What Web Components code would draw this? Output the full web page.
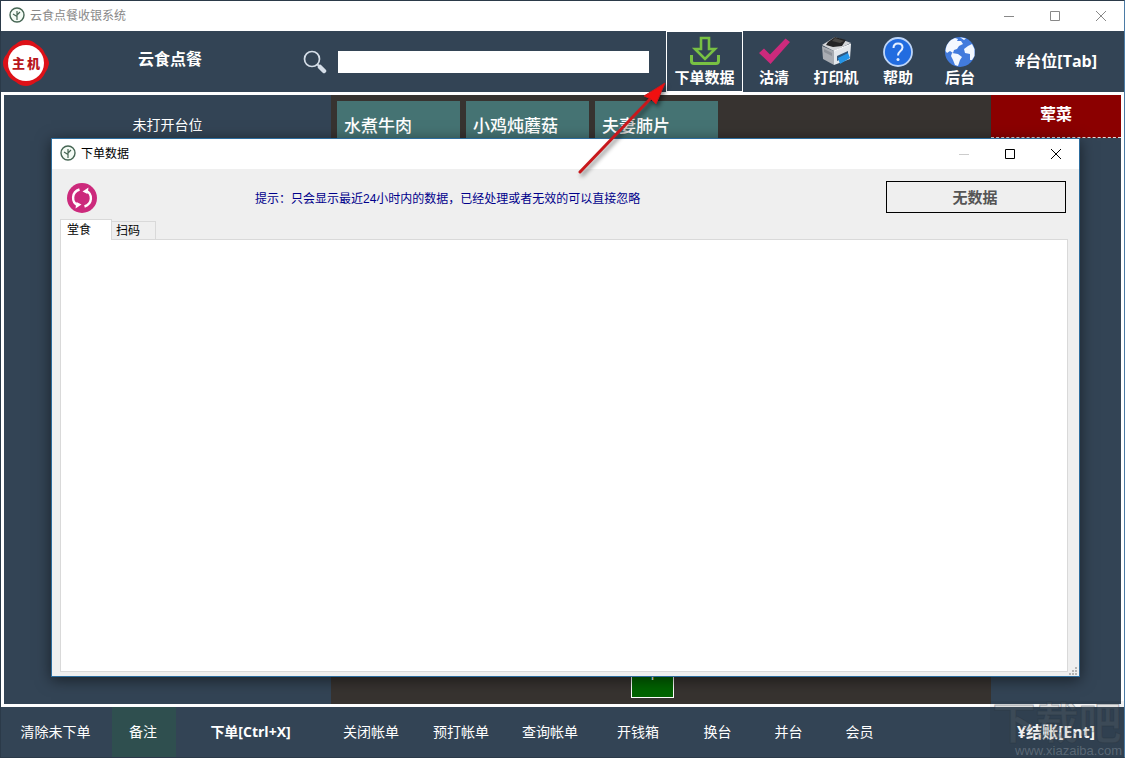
<!DOCTYPE html>
<html lang="zh-CN">
<head>
<meta charset="utf-8">
<title>云食点餐收银系统</title>
<style>
html,body{margin:0;height:100%}
body{font-family:"Open Sans","Noto Sans CJK SC",sans-serif;overflow:hidden}
</style>
</head>
<body>
<pos-app></pos-app>
<script>
const define=(name,html,setup)=>{
  const tpl=document.createElement('template');
  tpl.innerHTML=html;
  customElements.define(name,class extends HTMLElement{
    connectedCallback(){
      if(this.shadowRoot)return;
      this.attachShadow({mode:'open'}).append(tpl.content.cloneNode(true));
      if(setup)setup(this,this.shadowRoot);
    }
  });
};
const reset=`*{box-sizing:border-box}button{font:inherit;color:inherit;background:none;border:0;padding:0;margin:0;cursor:pointer}`;

define('title-bar',`<style>${reset}
:host{display:flex;height:30px;flex:none;background:#fff;color:var(--title,#888);padding-left:8px;align-items:center;font-size:12px}
span{flex:1;margin-left:5px;line-height:16px}
button{width:46px;height:28px;display:grid;place-items:center}
button:first-of-type{color:var(--min,inherit)}
svg{margin-bottom:2px}
svg.g{width:12px;height:12px;fill:none;stroke:currentColor;margin:0}
</style>
<svg width="16" height="16" viewBox="0 0 16 16" fill="none" stroke="#456553"><circle cx="8" cy="8" r="7" fill="#f4fbf5" stroke-width="1.4"/><path d="M8 13V4M8 9.500L4 7M8 8L11 5" stroke-width="1.200"/></svg>
<span><slot></slot></span>
<button aria-label="最小化"><svg class="g" viewBox="0 0 12 12"><path d="M1 6.500H11"/></svg></button>
<button aria-label="最大化"><svg class="g" viewBox="0 0 12 12"><path d="M1.500 1.500H10.500V10.500H1.500Z"/></svg></button>
<button aria-label="关闭"><svg class="g" viewBox="0 0 12 12"><path d="M1 1L11 11M11 1L1 11"/></svg></button>`);

const icons={
down:`<path d="M12 2H20V13H26L16 23L6 13H12Z" fill="none" stroke="#78c143" stroke-width="2.600"/><path d="M2.500 19V25Q2.500 27.500 5 27.500H27Q29.500 27.500 29.500 25V19" fill="none" stroke="#78c143" stroke-width="3"/>`,
check:`<path d="M1 17L6 12.500L12 18.500L27.500 2.500L32 6L12.500 28Z" fill="#cc2a7c"/>`,
printer:`<path d="M2 10L14 15L14 29L3 23Z" fill="#a9adb3"/><path d="M14 15L31 8L30 23L14 29Z" fill="#e3e7eb"/><path d="M2 9L15 1L31 7L14 15Z" fill="#d3d5d8"/><path d="M8 6L15 1L26 4L22 10L13 11L6 9Z" fill="#242425"/><path d="M15 2L24 5L20 7L12 5Z" fill="#4b4946"/><path d="M4 13L12 17V20L4 16Z" fill="#8d9299"/><path d="M17 20L28 15V20L17 25Z" fill="#31577c"/><path d="M18 22L28 17L30 22L20 28Z" fill="#2494e6"/><path d="M14 15L31 8" stroke="#fff"/>`,
help:`<circle cx="16" cy="16" r="14" fill="#216ce0" stroke="#bdd5f8" stroke-width="1.800"/><path d="M11.500 12Q11.500 7.500 16 7.500Q20.500 7.500 20.500 11.500Q20.500 13.500 18 15.500Q16 17.200 16 19.500" fill="none" stroke="#e5efff" stroke-width="2"/><circle cx="16" cy="23.500" r="1.500" fill="#e5efff"/>`,
globe:`<circle cx="16" cy="16" r="15" fill="#427bdd"/><path d="M1.500 15Q2 8 7 4L11 2L14 3L13 5L17 5L19 8L15 10L13 13L10 14L9 17L6 15L3 17Z" fill="#f3f8ff"/><path d="M8 17L14 18L18 21L16 24L14 30L11 29L9 24L7 20Z" fill="#f3f8ff"/><path d="M16 1.200L22 2.500L20 4Z" fill="#f3f8ff"/><path d="M24 10L28 8L30.500 13L30.500 20L28 24L26 24L26 18L21 17L20 13Z" fill="#f3f8ff"/>`
};
define('tool-button',`<style>${reset}
:host{display:block;width:62px;height:61px}
:host([active]){width:77px}
button{width:100%;height:100%;border:1px solid transparent;display:flex;flex-direction:column;align-items:center;padding-top:4px;color:#fff;font-weight:700;font-size:15px;line-height:18px;white-space:nowrap}
:host([active]) button{border-color:#fff}
svg{width:32px;height:32px;flex:none}
</style><button><svg viewBox="0 0 32 32"></svg><slot></slot></button>`,(h,r)=>{r.querySelector('svg').innerHTML=icons[h.getAttribute('icon')]});

define('dish-card',`<style>${reset}
:host{display:block;width:123px}
button{width:100%;height:50px;background:#457373;color:#fff;font-size:17px;font-weight:500;line-height:24px;text-align:left;padding-left:7px;white-space:nowrap}
</style><button><slot></slot></button>`);

define('foot-button',`<style>${reset}
:host{display:block;width:90px;height:100%;font-size:14px}
:host([note]){width:64px;background:#2f4f4f}
:host([clear]){width:111px}
:host([order]){width:151px;font-weight:700}
:host([mid]){width:88px}
:host([short]){width:71px}
:host([pay]){width:134px;font-weight:700;font-size:16px;margin-left:auto}
button{width:100%;height:100%;color:#fff;white-space:nowrap;padding:0 2px 2px 0}
</style><button><slot></slot></button>`);

define('host-seal',`<style>
:host{display:grid;place-items:center;width:46px;height:46px}
svg,span{grid-area:1/1}
span{color:#b8161c;font-size:13px;font-weight:700;line-height:20px;display:flex;gap:2px}
</style><svg width="46" height="46" viewBox="0 0 46 46"><path d="M23 0Q29 0 33 4Q40 8 42 14Q46 19 46 24Q45 29 42 33Q39 40 33 42Q28 46 23 46Q17 46 13 42Q6 39 4 33Q0 28 0 23Q0 18 4 14Q7 7 13 4Q17 0 23 0Z" fill="#dd1118"/><circle cx="23" cy="23" r="18" fill="#fff"/></svg><span><b>主</b><b>机</b></span>`);

define('pos-header',`<style>${reset}
:host{display:flex;height:61px;flex:none;background:#334455;color:#fff;align-items:center}
host-seal{margin:2px 0 0 2px}
h1{flex:none;width:242px;margin:0 0 6px;font-size:16px;line-height:22px;text-align:center}
label{flex:none;width:47px;height:24px;padding-left:12px}
input{flex:1;min-width:0;height:22px;border:0;padding:0 4px;background:#fff;font:14px "Noto Sans CJK SC",sans-serif;outline:0}
nav{display:flex;margin-left:17px}
.seat{width:133px;height:60px;font-size:16px;font-weight:700;white-space:nowrap;padding:0 3px 4px 0}
</style>
<host-seal></host-seal><h1>云食点餐</h1>
<label for="q" aria-label="搜索"><svg width="24" height="24" viewBox="0 0 24 24" fill="none" stroke="#d5dee8"><circle cx="9" cy="9" r="7.500" stroke-width="1.700"/><path d="M14 14L17 17" stroke-width="2"/><path d="M17 17L21 21" stroke-width="4.500" stroke-linecap="round"/></svg></label>
<input id="q" type="text">
<nav><tool-button icon="down" active>下单数据</tool-button><tool-button icon="check">沽清</tool-button><tool-button icon="printer">打印机</tool-button><tool-button icon="help">帮助</tool-button><tool-button icon="globe">后台</tool-button></nav>
<button class="seat">#台位[Tab]</button>`);

define('pos-board',`<style>${reset}
:host{display:grid;grid-template-columns:327px 1fr 130px;flex:1;min-height:0;margin:3px;color:#fff;background:#334455}
aside{text-align:center;font-size:14px;line-height:20px;padding-top:20px}
main{background:#373330;display:flex;flex-direction:column;justify-content:space-between;align-items:center;padding:6px;min-width:0}
.dishes{display:flex;gap:6px;align-self:stretch}
.page{width:43px;height:48px;background:#006400;border:1px solid #fff;font-size:16px;line-height:20px;margin-right:18px}
.cat{display:block;width:130px;height:43px;background:#8b0000;border-bottom:1px dashed #ddd;font-size:16px;font-weight:700;padding-bottom:6px}
</style>
<aside>未打开台位</aside>
<main><div class="dishes"><dish-card>水煮牛肉</dish-card><dish-card>小鸡炖蘑菇</dish-card><dish-card>夫妻肺片</dish-card></div><button class="page">1</button></main>
<div><button class="cat">荤菜</button></div>`);

define('order-dialog',`<style>${reset}
:host{display:flex;flex-direction:column;background:#efefef;border:1px solid #2d6d9e;box-shadow:0 3px 14px #0008;--title:#000;--min:#ccc;font-size:12px;color:#000}
.bar{display:flex;align-items:center;height:50px;padding:0 13px 0 15px}
.re{width:30px;height:30px;margin-top:8px}
.re svg{display:block}
p{margin:10px 0 0 158px;color:#00008b;font-family:"Liberation Sans","Noto Sans CJK SC",sans-serif;line-height:18px;white-space:nowrap}
.none{width:180px;height:32px;border:1px solid #000;color:#555;font-size:15px;font-weight:700;margin:5px 0 0 auto;padding-right:2px}
.tabs{display:flex;align-items:flex-end;padding-left:8px;height:21px;flex:none;margin-bottom:-1px;z-index:1}
.tabs button{border:1px solid #d9d9d9;width:45px;height:19px;line-height:18px;text-align:left;padding-left:4px}
.tabs button[aria-selected=true]{width:52px;height:21px;background:#fff;border-bottom:0;padding:0 0 0 6px;margin-right:-1px}
.panel{flex:1;background:#fff;border:1px solid #d9d9d9;margin:0 11px 0 8px}
.grip{display:block;height:4px;position:relative}
.grip svg{position:absolute;right:2px;bottom:1px}
</style>
<title-bar>下单数据</title-bar>
<div class="bar"><button class="re" aria-label="刷新"><svg width="30" height="30" viewBox="0 0 30 30"><circle cx="15" cy="15" r="15" fill="#cc2a7c"/><g fill="none" stroke="#fff" stroke-width="2.400"><path d="M12.500 6.500C4.500 9 4 19 11 22.500"/><path d="M17.500 23.500C25.500 21 26 11 19 7.500"/></g><path d="M15.500 8.500L21.500 4.500L20.500 11ZM14.500 21.500L8.500 25.500L9.500 19Z" fill="#fff"/></svg></button>
<p>提示：只会显示最近24小时内的数据，已经处理或者无效的可以直接忽略</p><button class="none">无数据</button></div>
<div class="tabs" role="tablist"><button role="tab" aria-selected="true">堂食</button><button role="tab" aria-selected="false">扫码</button></div>
<div class="panel" role="tabpanel"></div>
<div class="grip"><svg width="8" height="8" fill="#b5b5b5"><path d="M6 0h2v2h-2zM3 3h2v2h-2zM6 3h2v2h-2zM0 6h2v2h-2zM3 6h2v2h-2zM6 6h2v2h-2z"/></svg></div>`);

define('pos-footer',`<style>
:host{display:flex;height:50px;flex:none;background:#334455;color:#fff}
</style>
<foot-button clear>清除未下单</foot-button><foot-button note>备注</foot-button><foot-button order>下单[Ctrl+X]</foot-button><foot-button>关闭帐单</foot-button><foot-button>预打帐单</foot-button><foot-button mid>查询帐单</foot-button><foot-button mid>开钱箱</foot-button><foot-button short>换台</foot-button><foot-button short>并台</foot-button><foot-button short>会员</foot-button><foot-button pay>¥结账[Ent]</foot-button>`);

define('site-mark',`<style>
:host{display:block;text-align:center;pointer-events:none;white-space:nowrap;background:#0000000d;width:134px}
b{display:block;font-size:43px;line-height:44px;font-weight:700;color:#8080802e;-webkit-text-stroke:1px #25303c55}
small{display:block;font:13px/12px "Liberation Sans",sans-serif;color:#77838f99;text-align:right;padding-right:2px}
</style><b>下载吧</b><small>www.xiazaiba.com</small>`);

define('pos-app',`<style>
:host{display:flex;flex-direction:column;height:100vh;box-sizing:border-box;position:relative;background:#fff;border:1px solid #2b3a49;border-right-color:#4b7ba5}
order-dialog{position:absolute;left:50px;right:44px;top:137px;bottom:80px}
site-mark{position:absolute;right:0;bottom:0}
.arrow{position:absolute;left:571px;top:77px;filter:drop-shadow(2px 3px 2px #0007);pointer-events:none}
</style>
<title-bar>云食点餐收银系统</title-bar><pos-header></pos-header><pos-board></pos-board><pos-footer></pos-footer>
<site-mark></site-mark><order-dialog></order-dialog>
<svg class="arrow" width="100" height="105" viewBox="0 0 100 105"><path d="M8 94L79 20" stroke="#c8181c" stroke-width="3" stroke-linecap="round"/><path d="M93 5L84 26L79 21L72 18Z" fill="#f01010" stroke="#c8181c"/></svg>`);
</script>
</body>
</html>
